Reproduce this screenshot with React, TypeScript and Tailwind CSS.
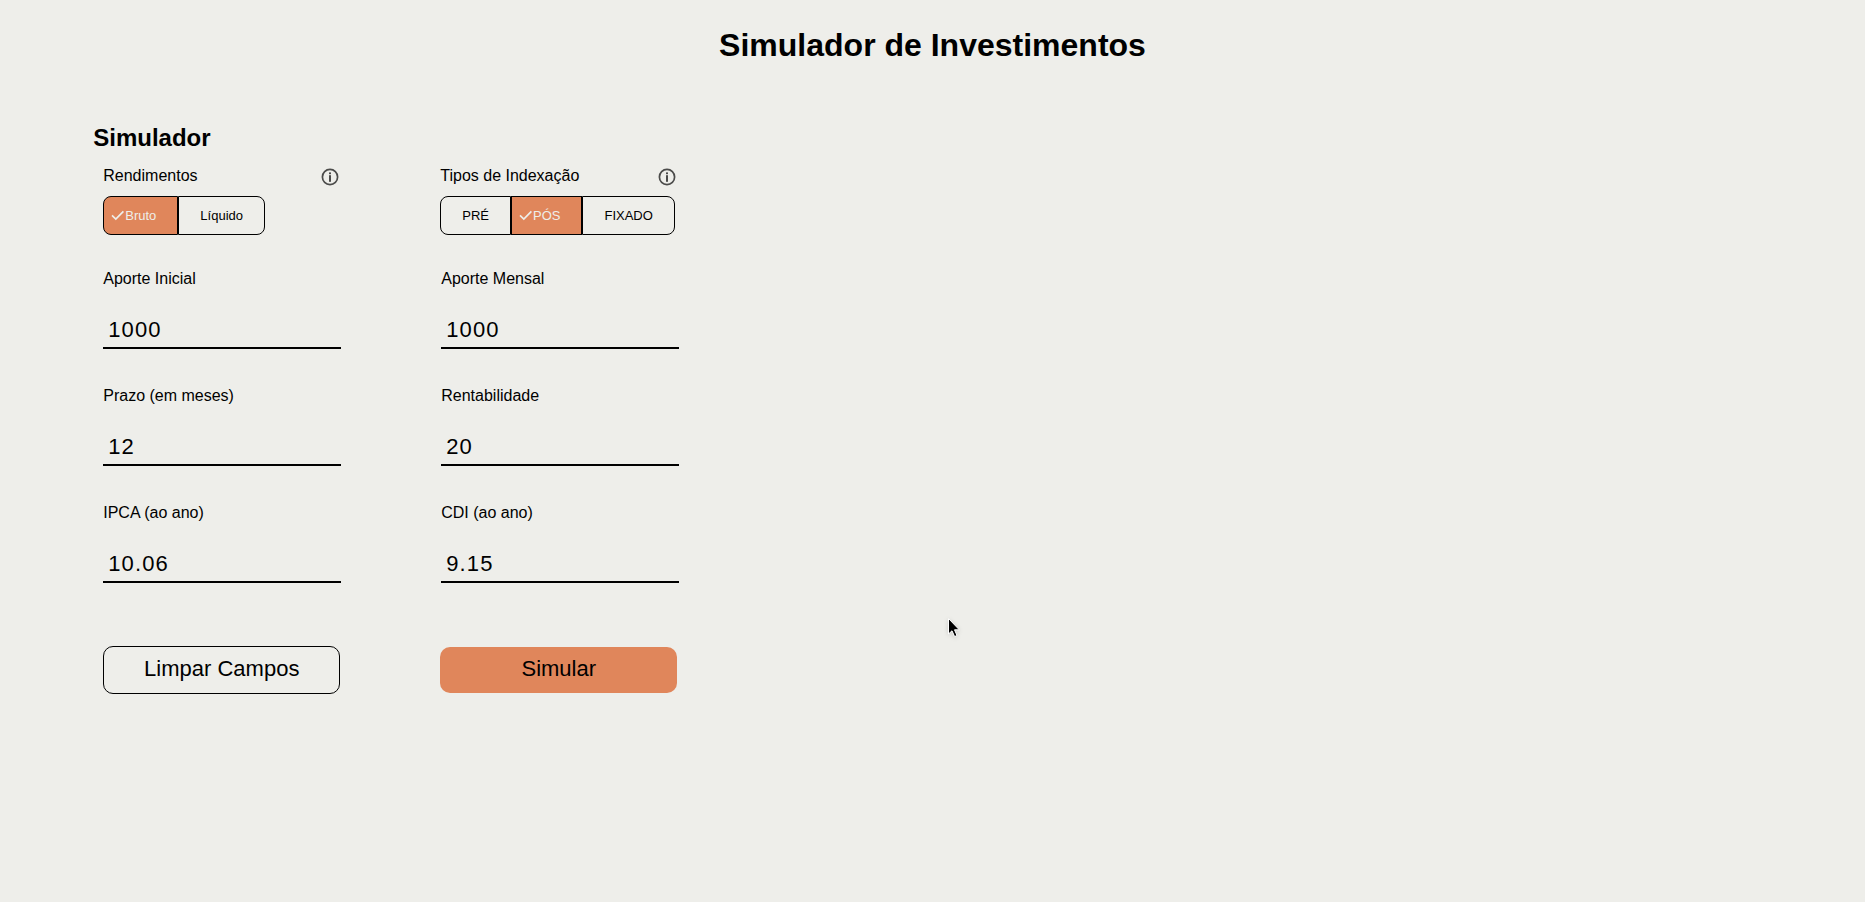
import { useId, useState } from 'react';
import type { FormEvent } from 'react';
import clsx from 'clsx';

function InfoIcon() {
  return (
    <svg viewBox="0 0 18 18" className="size-[18px]" aria-hidden="true">
      <circle cx="9" cy="9" r="7.6" fill="none" stroke="#4b4b4a" strokeWidth="1.7" />
      <rect x="8" y="4.4" width="2" height="1.8" fill="#4b4b4a" />
      <rect x="8" y="7.2" width="2" height="6.6" fill="#4b4b4a" />
    </svg>
  );
}

function CheckIcon() {
  return (
    <svg viewBox="0 0 14 12" className="h-3 w-[14px] shrink-0" fill="none" aria-hidden="true">
      <path d="M1 5.4 L4.8 9 L12.4 1.4" stroke="currentColor" strokeWidth="1.7" />
    </svg>
  );
}

type ToggleGroupProps = {
  title: string;
  options: string[];
  value: string;
  onChange: (value: string) => void;
};

function ToggleGroup({ title, options, value, onChange }: ToggleGroupProps) {
  const id = useId();
  return (
    <div>
      <div className="flex items-center justify-between">
        <span id={id} className="text-base">{title}</span>
        <button type="button" aria-label={'Sobre ' + title} className="mt-0.5 mr-px">
          <InfoIcon />
        </button>
      </div>
      <div role="group" aria-labelledby={id} className="mt-2 flex">
        {options.map((option) => {
          const selected = option === value;
          return (
            <button
              key={option}
              type="button"
              aria-pressed={selected}
              onClick={() => onChange(option)}
              className={clsx(
                'flex h-[39px] items-center border border-black pr-[21px] text-[13px] first:rounded-l-lg last:rounded-r-lg',
                selected ? 'bg-[#e0865b] pl-[7px] text-[#eeeeea]' : 'pl-[21px]',
              )}
            >
              {selected && <CheckIcon />}
              {option}
            </button>
          );
        })}
      </div>
    </div>
  );
}

type FieldProps = {
  label: string;
  value: string;
  onChange: (value: string) => void;
};

function Field({ label, value, onChange }: FieldProps) {
  const id = useId();
  return (
    <div className="flex flex-col">
      <label htmlFor={id} className="text-base">{label}</label>
      <input
        id={id}
        type="text"
        inputMode="decimal"
        value={value}
        onChange={(event) => onChange(event.target.value)}
        className="mt-5 h-[38px] w-full border-b-2 border-black bg-transparent px-[5px] pt-px text-[22px] tracking-wider outline-none"
      />
    </div>
  );
}

const FIELDS = ['Aporte Inicial', 'Aporte Mensal', 'Prazo (em meses)', 'Rentabilidade', 'IPCA (ao ano)', 'CDI (ao ano)'];
const INITIAL = ['1000', '1000', '12', '20', '10.06', '9.15'];

export default function App() {
  const [income, setIncome] = useState('Bruto');
  const [indexing, setIndexing] = useState('PÓS');
  const [values, setValues] = useState(INITIAL);

  const update = (index: number, value: string) =>
    setValues(values.map((current, i) => (i === index ? value : current)));

  const submit = (event: FormEvent) => event.preventDefault();

  return (
    <div className="min-h-screen bg-[#eeeeea] font-['Liberation_Sans',Arial,sans-serif] text-black">
      <h1 className="pt-[26px] text-center text-[32px] leading-[38px] font-bold">Simulador de Investimentos</h1>
      <main className="px-[5%] pt-[60px]">
        <h2 className="text-2xl leading-7 font-bold">Simulador</h2>
        <form onSubmit={submit} className="pt-3 pl-[10px]">
          <div className="grid max-w-[574px] grid-cols-2 gap-[100px]">
            <ToggleGroup title="Rendimentos" options={['Bruto', 'Líquido']} value={income} onChange={setIncome} />
            <ToggleGroup title="Tipos de Indexação" options={['PRÉ', 'PÓS', 'FIXADO']} value={indexing} onChange={setIndexing} />
          </div>
          <div className="mt-8 grid max-w-[576px] grid-cols-2 gap-x-[100px] gap-y-[35px]">
            {FIELDS.map((label, index) => (
              <Field key={label} label={label} value={values[index]} onChange={(value) => update(index, value)} />
            ))}
          </div>
          <div className="mt-[63px] grid max-w-[574px] grid-cols-2 items-center gap-[100px]">
            <button
              type="button"
              onClick={() => setValues(FIELDS.map(() => ''))}
              className="h-12 rounded-[10px] border border-black pb-[3px] text-[22px]"
            >
              Limpar Campos
            </button>
            <button type="submit" className="h-[46px] rounded-[10px] bg-[#e0865b] pb-[3px] text-[22px]">
              Simular
            </button>
          </div>
        </form>
      </main>
      <svg
        viewBox="0 0 14 22"
        className="pointer-events-none absolute top-[617px] left-[947px] h-[22px] w-[14px] drop-shadow-sm"
        aria-hidden="true"
      >
        <path d="M1.5 1.5 V17 L5 13.8 L7.6 19.6 L10 18.5 L7.5 12.8 H12.3 Z" fill="#000" stroke="#fff" strokeWidth="1" />
      </svg>
    </div>
  );
}
